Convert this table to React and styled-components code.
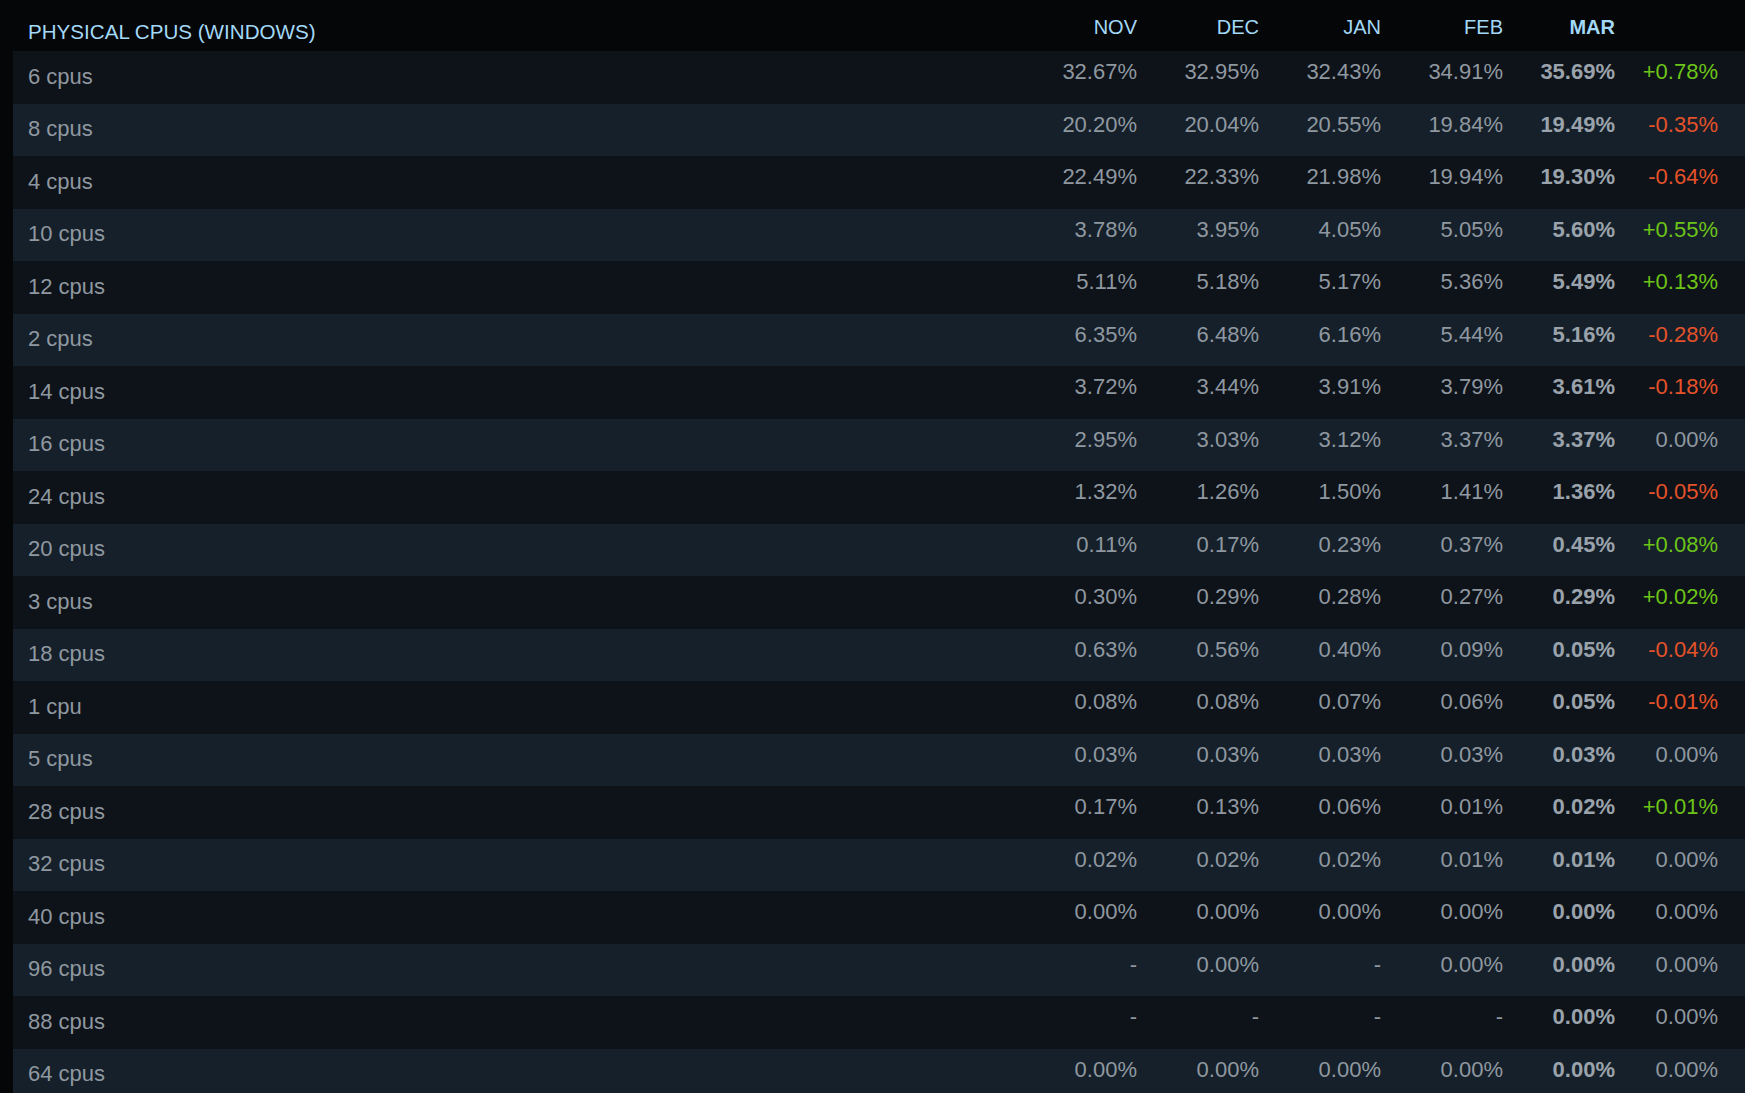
import React from "react";
import styled, { createGlobalStyle } from "styled-components";

const Global = createGlobalStyle`
  html, body {
    margin: 0;
    padding: 0;
    background: #050608;
  }
  body {
    font-family: "Liberation Sans", Arial, sans-serif;
    overflow: hidden;
  }
`;

const Table = styled.div`
  display: flex;
  flex-direction: column;
  width: 1745px;
`;

const cols = `1fr 122px 122px 122px 122px 112px 103px`;

const HeaderRow = styled.div`
  display: grid;
  grid-template-columns: ${cols};
  height: 51px;
  padding: 0 27px 0 28px;
  box-sizing: border-box;
  background: #050608;
  color: #a3d8f6;
  font-size: 20px;
`;

const HeadTitle = styled.div`
  padding-top: 20px;
  font-size: 20.6px;
  text-transform: uppercase;
  white-space: nowrap;
`;

const HeadMonth = styled.div`
  padding-top: 16px;
  text-align: right;
  font-weight: ${(p) => (p.$current ? 700 : 400)};
`;

const Row = styled.div`
  display: grid;
  grid-template-columns: ${cols};
  height: 52.5px;
  margin-left: 13px;
  padding: 0 27px 0 15px;
  box-sizing: border-box;
  background: ${(p) => (p.$alt ? "#16202a" : "#0e1219")};
  color: #8f98a0;
  font-size: 22px;
`;

const Label = styled.div`
  padding-top: 12.5px;
  white-space: nowrap;
`;

const Value = styled.div`
  padding-top: 8px;
  text-align: right;
  white-space: nowrap;
  font-weight: ${(p) => (p.$current ? 700 : 400)};
  color: ${(p) => (p.$current ? "#9aa3ab" : "#8f98a0")};
`;

const Change = styled(Value)`
  color: ${(p) =>
    p.$dir > 0 ? "#6cc418" : p.$dir < 0 ? "#e4522a" : "#8f98a0"};
`;

const months = ["NOV", "DEC", "JAN", "FEB", "MAR"];

const rows = [
  ["6 cpus", "32.67%", "32.95%", "32.43%", "34.91%", "35.69%", "+0.78%"],
  ["8 cpus", "20.20%", "20.04%", "20.55%", "19.84%", "19.49%", "-0.35%"],
  ["4 cpus", "22.49%", "22.33%", "21.98%", "19.94%", "19.30%", "-0.64%"],
  ["10 cpus", "3.78%", "3.95%", "4.05%", "5.05%", "5.60%", "+0.55%"],
  ["12 cpus", "5.11%", "5.18%", "5.17%", "5.36%", "5.49%", "+0.13%"],
  ["2 cpus", "6.35%", "6.48%", "6.16%", "5.44%", "5.16%", "-0.28%"],
  ["14 cpus", "3.72%", "3.44%", "3.91%", "3.79%", "3.61%", "-0.18%"],
  ["16 cpus", "2.95%", "3.03%", "3.12%", "3.37%", "3.37%", "0.00%"],
  ["24 cpus", "1.32%", "1.26%", "1.50%", "1.41%", "1.36%", "-0.05%"],
  ["20 cpus", "0.11%", "0.17%", "0.23%", "0.37%", "0.45%", "+0.08%"],
  ["3 cpus", "0.30%", "0.29%", "0.28%", "0.27%", "0.29%", "+0.02%"],
  ["18 cpus", "0.63%", "0.56%", "0.40%", "0.09%", "0.05%", "-0.04%"],
  ["1 cpu", "0.08%", "0.08%", "0.07%", "0.06%", "0.05%", "-0.01%"],
  ["5 cpus", "0.03%", "0.03%", "0.03%", "0.03%", "0.03%", "0.00%"],
  ["28 cpus", "0.17%", "0.13%", "0.06%", "0.01%", "0.02%", "+0.01%"],
  ["32 cpus", "0.02%", "0.02%", "0.02%", "0.01%", "0.01%", "0.00%"],
  ["40 cpus", "0.00%", "0.00%", "0.00%", "0.00%", "0.00%", "0.00%"],
  ["96 cpus", "-", "0.00%", "-", "0.00%", "0.00%", "0.00%"],
  ["88 cpus", "-", "-", "-", "-", "0.00%", "0.00%"],
  ["64 cpus", "0.00%", "0.00%", "0.00%", "0.00%", "0.00%", "0.00%"],
];

const dirOf = (s) => (s.startsWith("+") ? 1 : s.startsWith("-") ? -1 : 0);

export default function App() {
  return (
    <>
      <Global />
      <Table>
        <HeaderRow>
          <HeadTitle>Physical CPUs (Windows)</HeadTitle>
          {months.map((m, i) => (
            <HeadMonth key={m} $current={i === months.length - 1}>
              {m}
            </HeadMonth>
          ))}
          <div />
        </HeaderRow>
        {rows.map((r, idx) => (
          <Row key={r[0]} $alt={idx % 2 === 1}>
            <Label>{r[0]}</Label>
            {r.slice(1, 6).map((v, i) => (
              <Value key={i} $current={i === 4}>
                {v}
              </Value>
            ))}
            <Change $dir={dirOf(r[6])}>{r[6]}</Change>
          </Row>
        ))}
      </Table>
    </>
  );
}
